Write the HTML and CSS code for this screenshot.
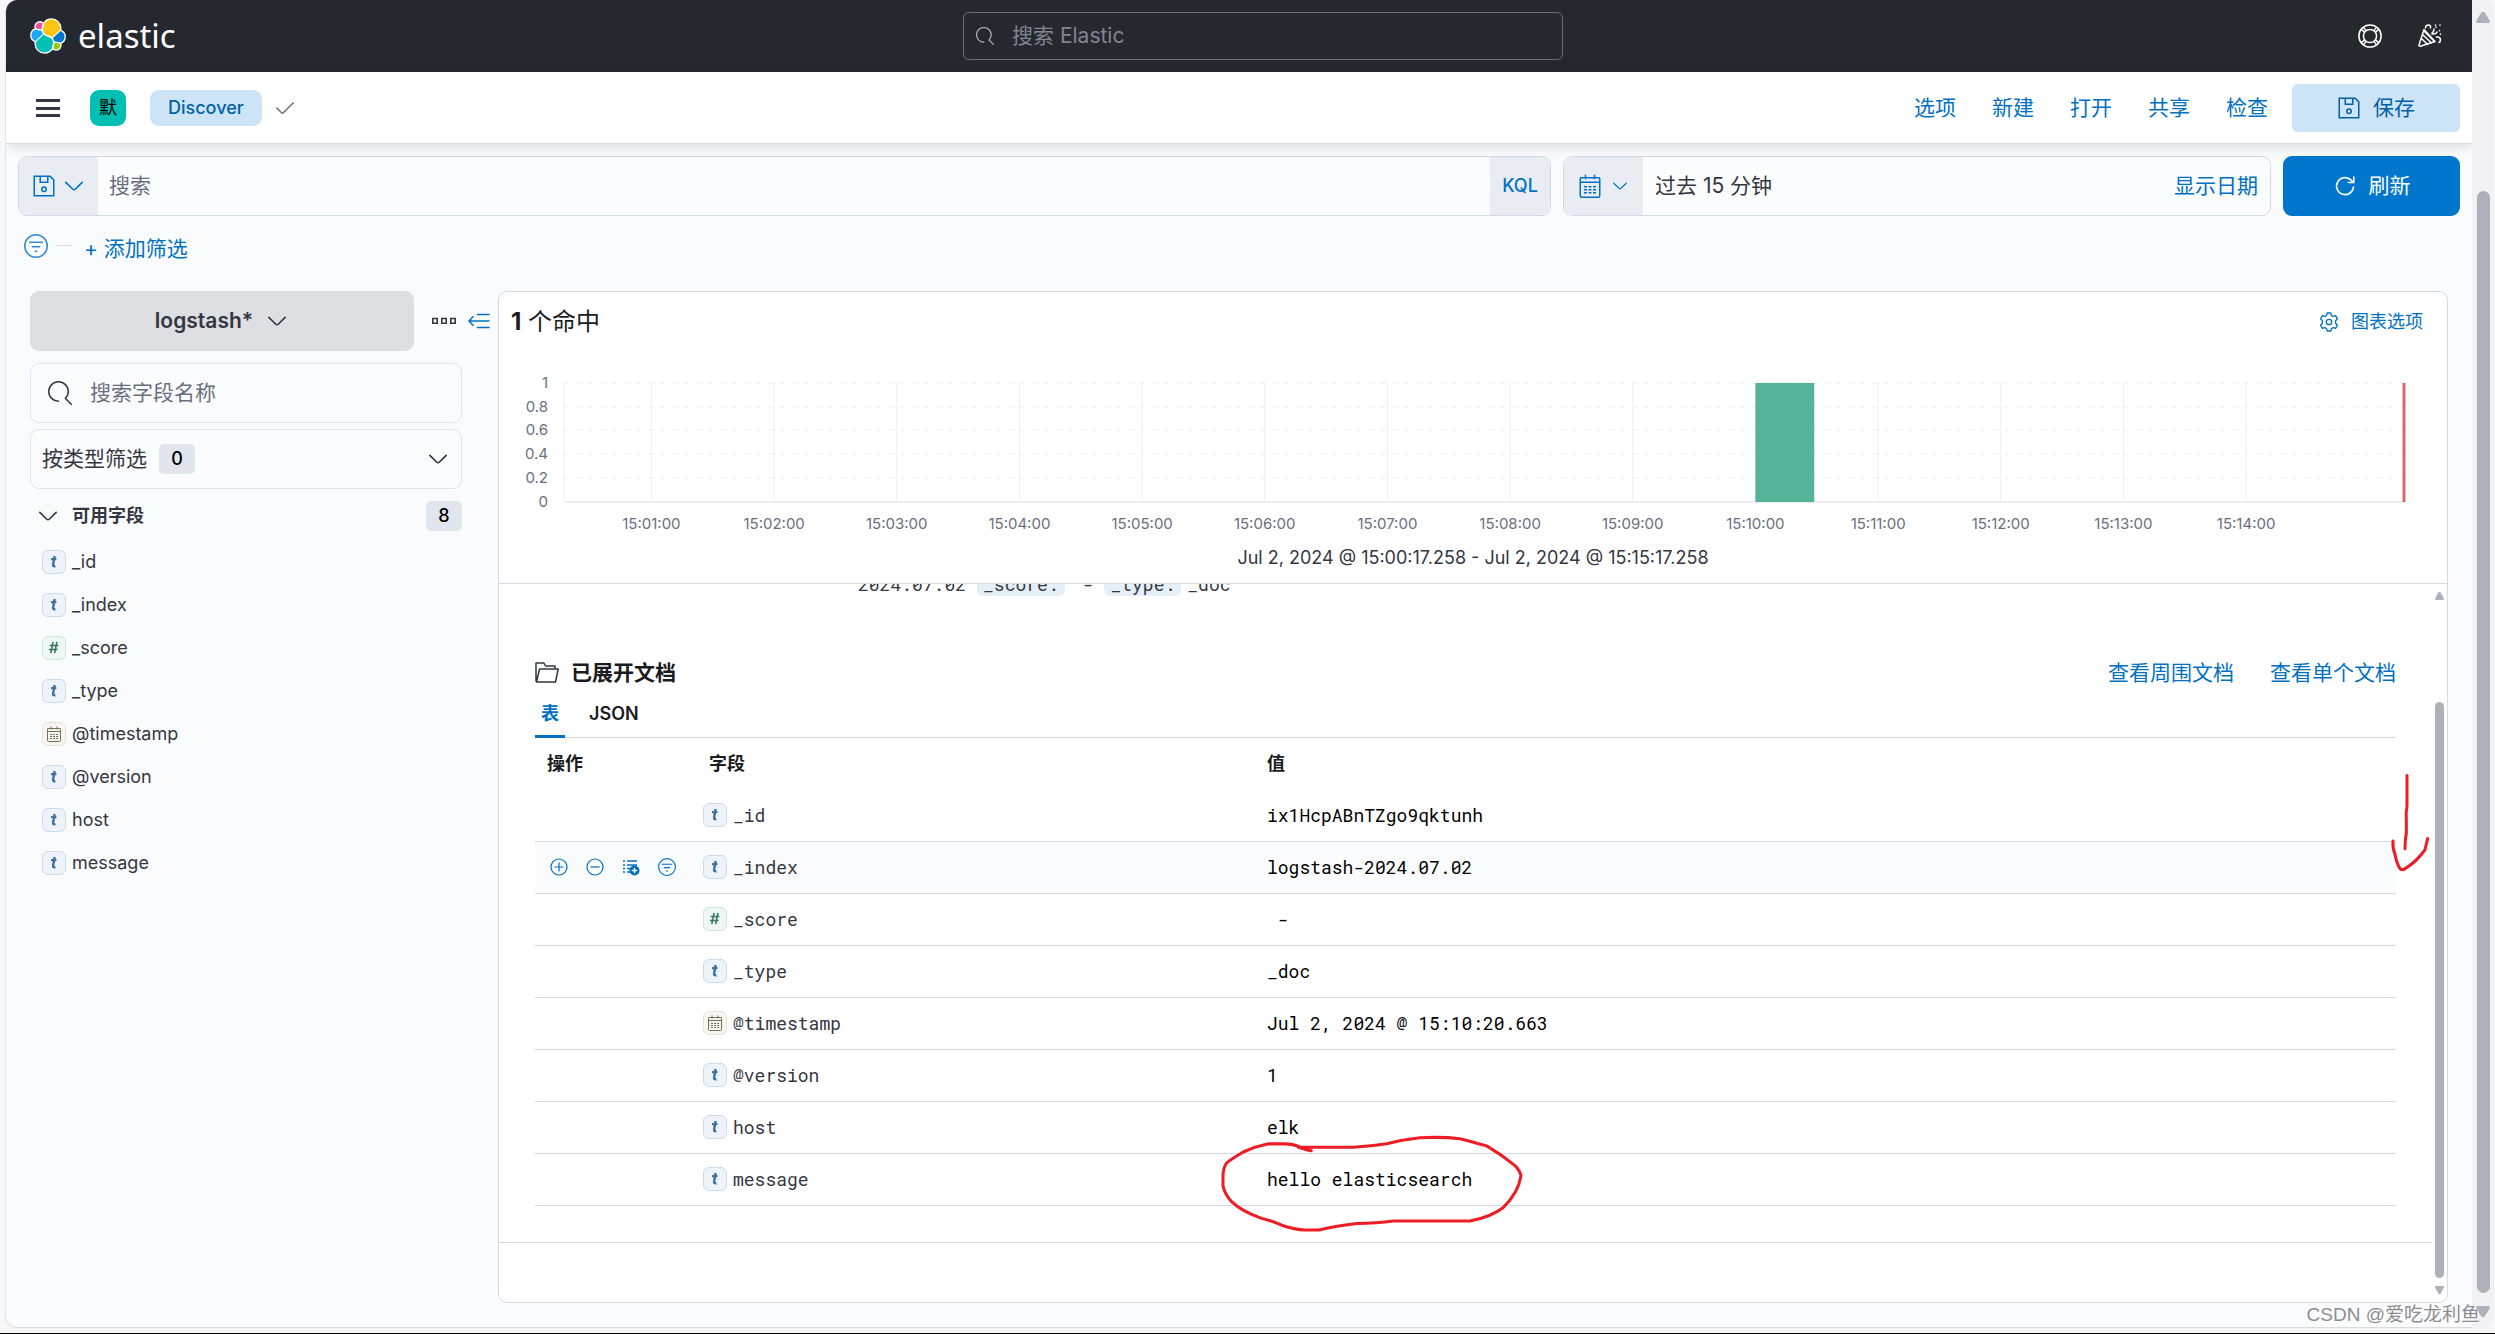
FILE: index.html
```html
<!DOCTYPE html>
<html lang="zh-CN">
<head>
<meta charset="utf-8">
<title>Discover - Elastic</title>
<link rel="stylesheet" href="styles.css">
</head>
<body>
<svg class="defs" aria-hidden="true">
  <symbol id="i-search" viewBox="0 0 16 16"><path fill="currentColor" d="M11.271 11.978l3.872 3.873a.502.502 0 00.708 0 .502.502 0 000-.708l-3.565-3.564c2.38-2.747 2.267-6.923-.342-9.532-2.73-2.73-7.17-2.73-9.898 0-2.728 2.729-2.728 7.17 0 9.9a6.955 6.955 0 004.949 2.05.5.5 0 000-1 5.96 5.96 0 01-4.242-1.757 6.01 6.01 0 010-8.486 6.004 6.004 0 018.484 0 6.01 6.01 0 010 8.486.5.5 0 00.034.738z"/></symbol>
  <symbol id="i-down" viewBox="0 0 16 16"><path fill="currentColor" d="M13.069 5.157L8.384 9.768a.546.546 0 01-.768 0L2.93 5.158a.552.552 0 00-.771 0 .53.53 0 000 .759l4.684 4.61c.641.631 1.672.63 2.312 0l4.684-4.61a.53.53 0 000-.76.552.552 0 00-.771 0z"/></symbol>
  <symbol id="i-save" viewBox="0 0 16 16"><path fill="none" stroke="currentColor" d="M1.5 1.5h10.6l2.4 2.4v10.6h-13zM5.5 1.5v4h5v-4"/><circle cx="8" cy="10.2" r="1.5" fill="none" stroke="currentColor"/></symbol>
  <symbol id="i-cal" viewBox="0 0 16 16"><path fill="none" stroke="currentColor" d="M2 2.5h12a.5.5 0 01.5.5v11.5a1 1 0 01-1 1h-11a1 1 0 01-1-1V3a.5.5 0 01.5-.5zM1.500 5.500h13M5 .5v3M11 .5v3"/><path fill="none" stroke="currentColor" stroke-dasharray="2 1" d="M4 8.500h8M4 10.500h8M4 12.500h8"/></symbol>
  <symbol id="i-filter" viewBox="0 0 16 16"><circle cx="8" cy="8" r="7.5" fill="none" stroke="currentColor"/><path fill="none" stroke="currentColor" stroke-linecap="round" d="M3.8 5.500h8.400M5.600 8.500h4.800M7.500 11.500h1"/></symbol>
  <symbol id="i-t" viewBox="0 0 24 24"><path fill="none" stroke="currentColor" stroke-width="2.600" d="M12.700 5.400l-1.700 9.600q-.2 2.200 2.500 1.500M8.800 8.900h5.800"/></symbol>
  <symbol id="i-num" viewBox="0 0 24 24"><path fill="none" stroke="currentColor" stroke-width="1.700" d="M11 5.300L8.500 17.500M15.200 5.300L12.700 17.500M7.300 9.300h9.400M6.500 13.600h9.400"/></symbol>
</svg>

<div class="app">
  <header class="topbar">
    <a class="brand" href="#" aria-label="Elastic">
      <svg width="36" height="36" viewBox="0 0 32 32">
        <g stroke="#fff" stroke-width="2.400" stroke-linejoin="round">
          <path fill="#fec514" d="M12.580 13.787l7.002 3.211 7.066-6.213a7.849 7.849 0 00.152-1.557c0-4.287-3.462-7.787-7.717-7.787a7.710 7.710 0 00-6.371 3.384l-1.176 6.123z"/>
          <path fill="#00bfb3" d="M5.320 21.228a7.900 7.900 0 00-.15 1.566c0 4.300 3.487 7.800 7.775 7.800a7.743 7.743 0 006.407-3.400l1.163-6.090-1.553-2.984-7.026-3.216z"/>
          <path fill="#f04e98" d="M5.288 9.061l4.800 1.137 1.050-5.483A3.800 3.800 0 008.830 3.930a3.830 3.830 0 00-3.820 3.840c0 .45.09.89.278 1.291z"/>
          <path fill="#1ba9f5" d="M4.870 10.208A5.430 5.430 0 001.297 15.338a5.440 5.440 0 003.490 5.083l6.736-6.113-1.237-2.654z"/>
          <path fill="#93c90e" d="M20.862 27.185a3.780 3.780 0 002.295.783 3.830 3.830 0 003.820-3.840c0-.469-.082-.9-.249-1.290l-4.800-1.131z"/>
          <path fill="#0077cc" d="M21.848 20.563l5.283 1.243a5.440 5.440 0 003.573-5.130 5.450 5.450 0 00-3.490-5.079l-6.910 6.078z"/>
        </g>
        <g>
          <path fill="#fec514" d="M12.580 13.787l7.002 3.211 7.066-6.213a7.849 7.849 0 00.152-1.557c0-4.287-3.462-7.787-7.717-7.787a7.710 7.710 0 00-6.371 3.384l-1.176 6.123z"/>
          <path fill="#00bfb3" d="M5.320 21.228a7.900 7.900 0 00-.15 1.566c0 4.300 3.487 7.800 7.775 7.800a7.743 7.743 0 006.407-3.400l1.163-6.090-1.553-2.984-7.026-3.216z"/>
          <path fill="#f04e98" d="M5.288 9.061l4.800 1.137 1.050-5.483A3.800 3.800 0 008.830 3.930a3.830 3.830 0 00-3.820 3.840c0 .45.09.89.278 1.291z"/>
          <path fill="#1ba9f5" d="M4.870 10.208A5.430 5.430 0 001.297 15.338a5.440 5.440 0 003.490 5.083l6.736-6.113-1.237-2.654z"/>
          <path fill="#93c90e" d="M20.862 27.185a3.780 3.780 0 002.295.783 3.830 3.830 0 003.820-3.840c0-.469-.082-.9-.249-1.290l-4.800-1.131z"/>
          <path fill="#0077cc" d="M21.848 20.563l5.283 1.243a5.440 5.440 0 003.573-5.130 5.450 5.450 0 00-3.490-5.079l-6.910 6.078z"/>
        </g>
      </svg>
      <span class="wordmark">elastic</span>
    </a>
    <label class="global-search">
      <svg width="18" height="18"><use href="#i-search"/></svg>
      <input type="search" placeholder="搜索 Elastic" aria-label="搜索 Elastic">
    </label>
    <div class="top-actions">
      <button class="bare" aria-label="帮助">
        <svg width="24" height="24" viewBox="0 0 16 16" fill="none" stroke="#fff"><circle cx="8" cy="8" r="7.400"/><circle cx="8" cy="8" r="4.400"/><path d="M2.400 3.800l2.200 1.800M3.800 2.400l1.800 2.200M13.600 3.800l-2.200 1.800M12.200 2.400l-1.800 2.200M2.400 12.200l2.200-1.800M3.800 13.600l1.800-2.200M13.600 12.200l-2.200-1.800M12.200 13.600l-1.800-2.200"/></svg>
      </button>
      <button class="bare" aria-label="新增功能">
        <svg width="24" height="24" viewBox="0 0 24 24" fill="none" stroke="#fff" stroke-width="1.500" stroke-linecap="round" stroke-linejoin="round"><path d="M6 5.500L1 21q-.2 1.500 1.300 1.300L17 17.500zM5 11l8.500 8M4 15l5.500 5.500M6.500 7.500l9 9M7.500 4q0-3 3-3 2.500 0 2 3M14 9q2-1 2-4M14 10q4 .5 5-2M18.500 13q3.500-.5 4 2.500.2 2-1.500 3M18 3v.2M22 1v.2M21.500 6.500v.2M22.500 10v.2M17.500 1v.2"/></svg>
      </button>
    </div>
  </header>

  <nav class="navbar">
    <button class="bare" aria-label="切换导航"><svg width="24" height="18" viewBox="0 0 24 18" fill="#343741"><path d="M0 0h24v3H0zM0 8h24v3H0zM0 15h24v3H0z"/></svg></button>
    <button class="space">默</button>
    <button class="crumb">Discover</button>
    <svg class="tick" width="18" height="12" viewBox="0 0 18 12" fill="none" stroke="#69707d" stroke-width="1.500" stroke-linecap="round"><path d="M.8 6l5 5q.6.500 1.200 0L17.300.800"/></svg>
    <div class="nav-links">
      <a href="#">选项</a><a href="#">新建</a><a href="#">打开</a><a href="#">共享</a><a href="#">检查</a>
      <button class="save"><svg width="24" height="24"><use href="#i-save"/></svg>保存</button>
    </div>
  </nav>

  <section class="query">
    <div class="field kql">
      <button class="seg saved" aria-label="已保存查询"><svg width="24" height="24"><use href="#i-save"/></svg><svg width="24" height="24"><use href="#i-down"/></svg></button>
      <input type="text" placeholder="搜索" aria-label="搜索">
      <button class="seg lang">KQL</button>
    </div>
    <div class="field date">
      <button class="seg quick" aria-label="快速选择"><svg width="24" height="24"><use href="#i-cal"/></svg><svg width="18" height="18"><use href="#i-down"/></svg></button>
      <button class="range">过去 15 分钟</button>
      <a href="#">显示日期</a>
    </div>
    <button class="refresh"><svg width="24" height="24" viewBox="0 0 24 24" fill="none" stroke="#fff" stroke-width="1.600" stroke-linecap="round"><path d="M20.500 13a8.500 8.500 0 11-3-7.400l2.700 2.400M20.800 3v5.500h-5.500"/></svg>刷新</button>
  </section>

  <div class="filters">
    <svg width="24" height="24"><use href="#i-filter"/></svg>
    <span class="dash"></span>
    <a href="#">+ 添加筛选</a>
  </div>

  <div class="content">
    <aside class="sidebar">
      <div class="pattern">
        <button class="index">logstash*<svg width="24" height="24"><use href="#i-down"/></svg></button>
        <button class="bare" aria-label="更多"><svg width="24" height="24" viewBox="0 0 24 24" fill="none" stroke="#343741" stroke-width="1.600"><path d="M.8 9.500h4.400v4.800H.8zM9.800 9.500h4.400v4.800H9.800zM18.800 9.500h4.400v4.800h-4.400z"/></svg></button>
        <button class="bare collapse" aria-label="收起侧边栏"><svg width="22" height="16" viewBox="0 0 22 16" fill="none" stroke="#0071c2" stroke-width="1.600" stroke-linecap="round"><path d="M1 8h20M5 3.800L1 8l4 4.200M9.500 1.500H21M9.500 14.500H21"/></svg></button>
      </div>
      <label class="field find"><svg width="24" height="24"><use href="#i-search"/></svg><input type="search" placeholder="搜索字段名称" aria-label="搜索字段名称"></label>
      <button class="field types">按类型筛选<span class="badge">0</span><svg width="24" height="24"><use href="#i-down"/></svg></button>
      <button class="group"><svg width="24" height="24"><use href="#i-down"/></svg>可用字段<span class="badge">8</span></button>
      <ul class="fields">
        <li><svg class="tok"><use href="#i-t"/></svg>_id</li>
        <li><svg class="tok"><use href="#i-t"/></svg>_index</li>
        <li><svg class="tok num"><use href="#i-num"/></svg>_score</li>
        <li><svg class="tok"><use href="#i-t"/></svg>_type</li>
        <li><svg class="tok day"><use href="#i-cal"/></svg>@timestamp</li>
        <li><svg class="tok"><use href="#i-t"/></svg>@version</li>
        <li><svg class="tok"><use href="#i-t"/></svg>host</li>
        <li><svg class="tok"><use href="#i-t"/></svg>message</li>
      </ul>
    </aside>

    <main class="panel">
      <section class="histogram">
        <div class="hits">
          <h1><b>1</b> 个命中</h1>
          <a href="#"><svg width="20" height="20" viewBox="0 0 20 20" fill="none" stroke="currentColor" stroke-width="1.300" stroke-linejoin="round"><circle cx="10" cy="10" r="2.700"/><path d="M8.200 1h3.600l.7 2.500 1.600.9 2.500-.7 1.800 3.100L16.600 8.700v2.600l1.800 1.900-1.800 3.100-2.500-.7-1.600.9-.7 2.500H8.200l-.7-2.500-1.600-.9-2.500.7-1.800-3.100 1.800-1.900V8.700L1.600 6.800l1.800-3.100 2.500.7 1.600-.9z"/></svg>图表选项</a>
        </div>
        <svg class="chart" height="150" role="img" aria-label="命中数随时间分布">
          <g class="rows"><path d="M0 1h1840"/><path d="M0 25h1840"/><path d="M0 48h1840"/><path d="M0 72h1840"/><path d="M0 96h1840"/></g>
          <line class="axis" x1="0" x2="100%" y1="120" y2="120"/>
          <g class="cols"><line x1="0" x2="0" y1="1" y2="120"/><line x1="4.75%" x2="4.75%" y1="1" y2="120"/><line x1="11.42%" x2="11.42%" y1="1" y2="120"/><line x1="18.08%" x2="18.08%" y1="1" y2="120"/><line x1="24.75%" x2="24.75%" y1="1" y2="120"/><line x1="31.42%" x2="31.42%" y1="1" y2="120"/><line x1="38.08%" x2="38.08%" y1="1" y2="120"/><line x1="44.75%" x2="44.75%" y1="1" y2="120"/><line x1="51.42%" x2="51.42%" y1="1" y2="120"/><line x1="58.08%" x2="58.08%" y1="1" y2="120"/><line x1="64.75%" x2="64.75%" y1="1" y2="120"/><line x1="71.42%" x2="71.42%" y1="1" y2="120"/><line x1="78.08%" x2="78.08%" y1="1" y2="120"/><line x1="84.75%" x2="84.75%" y1="1" y2="120"/><line x1="91.42%" x2="91.42%" y1="1" y2="120"/></g>
          <rect x="64.75%" y="1" width="3.2%" height="119" fill="#54b399"/>
          <line class="now" x1="100%" x2="100%" y1="1" y2="120"/>
          <g class="ylab"><text x="-16" y="6">1</text><text x="-16" y="30">0.8</text><text x="-16" y="53">0.6</text><text x="-16" y="77">0.4</text><text x="-16" y="101">0.2</text><text x="-16" y="125">0</text></g>
          <g class="xlab"><text x="4.75%" y="147">15:01:00</text><text x="11.42%" y="147">15:02:00</text><text x="18.08%" y="147">15:03:00</text><text x="24.75%" y="147">15:04:00</text><text x="31.42%" y="147">15:05:00</text><text x="38.08%" y="147">15:06:00</text><text x="44.75%" y="147">15:07:00</text><text x="51.42%" y="147">15:08:00</text><text x="58.08%" y="147">15:09:00</text><text x="64.75%" y="147">15:10:00</text><text x="71.42%" y="147">15:11:00</text><text x="78.08%" y="147">15:12:00</text><text x="84.75%" y="147">15:13:00</text><text x="91.42%" y="147">15:14:00</text></g>
        </svg>
        <p class="caption">Jul 2, 2024 @ 15:00:17.258 - Jul 2, 2024 @ 15:15:17.258</p>
      </section>

      <div class="results">
        <div class="docs">
          <div class="summary"><span>2024.07.02</span><mark>_score:</mark><span class="none">-</span><mark>_type:</mark><span class="last">_doc</span></div>
          <section class="expanded">
            <div class="doc-head">
              <svg width="24" height="21" viewBox="0 0 24 21" fill="none" stroke="#343741" stroke-width="1.500" stroke-linejoin="round"><path d="M1 19.500V1h8l1.500 3H20v3M1.500 20L4.500 7h18.700L20.500 20z"/></svg>
              <h2>已展开文档</h2>
              <a href="#">查看周围文档</a><a href="#">查看单个文档</a>
            </div>
            <div class="tabs"><button class="tab on">表</button><button class="tab">JSON</button></div>
            <table>
              <thead><tr><th class="c-act">操作</th><th class="c-name">字段</th><th>值</th></tr></thead>
              <tbody>
                <tr><td></td><td class="name"><div><svg class="tok"><use href="#i-t"/></svg>_id</div></td><td>ix1HcpABnTZgo9qktunh</td></tr>
                <tr class="hover"><td><div class="acts">
                  <button class="bare" aria-label="筛留"><svg width="18" height="18" viewBox="0 0 18 18" fill="none" stroke="currentColor" stroke-width="1.200"><circle cx="9" cy="9" r="8"/><path d="M4.500 9h9M9 4.500v9"/></svg></button>
                  <button class="bare" aria-label="筛除"><svg width="18" height="18" viewBox="0 0 18 18" fill="none" stroke="currentColor" stroke-width="1.200"><circle cx="9" cy="9" r="8"/><path d="M4.500 9h9"/></svg></button>
                  <button class="bare" aria-label="切换列"><svg width="18" height="18" viewBox="0 0 18 18" fill="none" stroke="currentColor" stroke-width="1.300"><path d="M1 3h2M5 3h10M1 7h2M5 7h10M1 10.500h2M5 10.500h4M1 14h2M5 14h3"/><circle cx="12.500" cy="12.500" r="5" fill="currentColor" stroke="none"/><path stroke="#fff" d="M9.800 12.500h5.400M12.500 9.800v5.400"/></svg></button>
                  <button class="bare" aria-label="筛选存在的字段"><svg width="18" height="18"><use href="#i-filter"/></svg></button>
                </div></td><td class="name"><div><svg class="tok"><use href="#i-t"/></svg>_index</div></td><td>logstash-2024.07.02</td></tr>
                <tr><td></td><td class="name"><div><svg class="tok num"><use href="#i-num"/></svg>_score</div></td><td>&nbsp;-</td></tr>
                <tr><td></td><td class="name"><div><svg class="tok"><use href="#i-t"/></svg>_type</div></td><td>_doc</td></tr>
                <tr><td></td><td class="name"><div><svg class="tok day"><use href="#i-cal"/></svg>@timestamp</div></td><td>Jul 2, 2024 @ 15:10:20.663</td></tr>
                <tr><td></td><td class="name"><div><svg class="tok"><use href="#i-t"/></svg>@version</div></td><td>1</td></tr>
                <tr><td></td><td class="name"><div><svg class="tok"><use href="#i-t"/></svg>host</div></td><td>elk</td></tr>
                <tr><td></td><td class="name"><div><svg class="tok"><use href="#i-t"/></svg>message</div></td><td class="marked">hello elasticsearch
                  <svg class="ring" viewBox="90 1170 918 288" preserveAspectRatio="none"><path d="M364 1216Q345 1215 325 1203Q305 1196 285 1196H235Q195 1204 160 1220Q125 1240 110 1252Q99 1268 99 1290V1320Q105 1345 125 1366Q155 1395 215 1415Q245 1422 275 1435Q315 1448 345 1449H387Q430 1438 500 1430Q560 1430 610 1423H840Q905 1410 940 1383Q985 1340 993 1290Q990 1275 975 1260Q935 1228 890 1202Q845 1190 810 1181Q760 1175 690 1178Q640 1183 590 1196Q540 1204 490 1206H325L362 1216"/></svg></td></tr>
              </tbody>
            </table>
          </section>
        </div>
        <div class="bar inner" aria-hidden="true"><i class="up"></i><i class="thumb"></i><i class="down"></i></div>
        <svg class="arrow" viewBox="1020 1210 126 282" preserveAspectRatio="none"><path d="M1071 1220V1305Q1067 1325 1069 1345V1380Q1065 1400 1065 1424M1029 1403Q1027 1420 1035 1440Q1040 1465 1050 1480Q1057 1485 1065 1480Q1100 1460 1125 1427Q1129 1410 1133 1396"/></svg>
      </div>
    </main>
  </div>
</div>
<div class="bar outer" aria-hidden="true"><i class="up"></i><i class="thumb"></i><i class="down"></i></div>
<div class="watermark">CSDN @爱吃龙利鱼</div>
</body>
</html>
```
FILE: styles.css
```css
* { box-sizing: border-box; }

body {
  margin: 0;
  min-height: 100vh;
  display: flex;
  padding: 0 1px 5px 5px;
  background: #f7f7f7;
  border-bottom: 1px solid #000;
  color: #343741;
  font: 21px/30px Inter, "Noto Sans CJK SC", sans-serif;
}

.defs { position: absolute; width: 0; height: 0; }

button, input {
  margin: 0;
  padding: 0;
  border: 0;
  background: none;
  color: inherit;
  font: inherit;
}

input { flex: 1; min-width: 0; outline: 0; }
input::placeholder { color: #69707d; opacity: 1; }
a { color: #0071c2; text-decoration: none; }
svg { flex: none; display: block; }
h1, h2, p, ul { margin: 0; padding: 0; }
.bare { display: flex; }

.app {
  flex: 1;
  min-width: 0;
  display: flex;
  flex-direction: column;
  background: #fafbfd;
  border-left: 1px solid #e3e4e8;
  border-bottom: 1px solid #dcdcdc;
  border-radius: 12px 0 0 12px;
  overflow: hidden;
}

/* Header */
.topbar {
  height: 72px;
  display: grid;
  grid-template-columns: 933fr 600px 879fr;
  align-items: center;
  padding: 0 30px 0 24px;
  background: #25282f;
}
.brand { display: flex; align-items: center; gap: 12px; }
.wordmark { color: #fff; font: 400 33px/36px "Noto Sans", sans-serif; }
.global-search {
  display: flex;
  align-items: center;
  gap: 18px;
  height: 48px;
  padding: 0 12px;
  border: 1px solid #6b6c70;
  border-radius: 6px;
  color: #b8babd;
}
.global-search input::placeholder { color: #81858f; }
.top-actions { display: flex; justify-content: flex-end; gap: 36px; }

.navbar {
  position: relative;
  height: 72px;
  display: flex;
  align-items: center;
  padding: 0 12px 0 30px;
  background: #fff;
  border-bottom: 1px solid #d3dae6;
  box-shadow: 0 2px 12px rgba(0, 0, 0, .14);
}
.space {
  width: 36px;
  height: 36px;
  margin: 0 24px 0 30px;
  border-radius: 9px;
  background: #00bfb3;
  color: #000;
  font-size: 18px;
}
.crumb {
  height: 36px;
  padding: 0 18px;
  border-radius: 9px;
  background: #cce4f5;
  color: #0061a6;
  font-size: 18px;
  font-weight: 500;
}
.tick { margin-left: 14px; }
.nav-links { display: flex; align-items: center; gap: 36px; margin-left: auto; }
.save {
  display: flex;
  align-items: center;
  justify-content: center;
  gap: 12px;
  width: 168px;
  height: 48px;
  margin-left: -12px;
  border-radius: 6px;
  background: #cce4f5;
  color: #0061a6;
}

/* Query row */
.query {
  display: grid;
  grid-template-columns: 1533fr 708fr 177px;
  gap: 12px;
  padding: 12px 12px 0;
}
.field {
  display: flex;
  align-items: center;
  height: 60px;
  border: 1px solid #d3dae6;
  border-radius: 9px;
  background: #fbfcfd;
  overflow: hidden;
}
.seg {
  display: flex;
  align-items: center;
  justify-content: center;
  align-self: stretch;
  background: #e9edf3;
  color: #0071c2;
}
.kql input { padding: 0 11px; }
.saved { width: 79px; gap: 6px; }
.lang { width: 60px; font-size: 18px; font-weight: 500; }
.date { padding-right: 12px; }
.quick { width: 79px; gap: 9px; }
.range { flex: 1; padding-left: 12px; text-align: left; }
.refresh {
  display: flex;
  align-items: center;
  justify-content: center;
  gap: 12px;
  border-radius: 9px;
  background: #0077cc;
  color: #fff;
}

.filters {
  display: flex;
  align-items: flex-start;
  height: 30px;
  margin-top: 18px;
  padding-left: 18px;
  color: #2f8bd0;
}
.dash { width: 15px; height: 1px; margin: 11px 12px 0 9px; background: #d3dae6; }

/* Body */
.content { flex: 1; display: flex; padding: 27px 24px 24px; }
.sidebar { width: 468px; }
.pattern { display: flex; align-items: center; margin-bottom: 12px; }
.index {
  display: flex;
  align-items: center;
  justify-content: center;
  gap: 12px;
  width: 384px;
  height: 60px;
  margin-right: 18px;
  border-radius: 9px;
  background: #dddfe3;
  font-weight: 600;
}
.collapse { margin-left: 12px; }
.find, .types { width: 432px; border-color: #e2e5ef; }
.find { gap: 18px; padding: 0 17px; margin-bottom: 6px; }
.types { gap: 12px; padding: 0 11px; }
.types svg { margin-left: auto; }
.badge {
  width: 36px;
  border-radius: 5px;
  background: #e0e5ee;
  color: #000;
  font: 500 18px/30px Inter, sans-serif;
  text-align: center;
}
.group {
  display: flex;
  align-items: center;
  gap: 12px;
  width: 432px;
  height: 48px;
  margin-top: 3px;
  padding-left: 6px;
  font-size: 18px;
  font-weight: 700;
}
.group .badge { margin-left: auto; }
.fields { list-style: none; padding: 0 12px; }
.fields li { display: flex; align-items: center; gap: 6px; height: 43px; font-size: 18px; }
.tok {
  width: 24px;
  height: 24px;
  border: 1px solid #cadcec;
  border-radius: 6px;
  background: #edf3f9;
  color: #40709c;
}
.num { background: #eef7f4; border-color: #cce8df; color: #387765; }
.day { padding: 3px; background: #f8f6f2; border-color: #e9e2d4; color: #7b6f55; }

.panel {
  flex: 1;
  min-width: 0;
  display: flex;
  flex-direction: column;
  border: 1px solid #d3dae6;
  border-radius: 9px;
  background: #fff;
}
.histogram { padding: 12px 0 10px; border-bottom: 1px solid #d3dae6; }
.hits { display: flex; align-items: center; justify-content: space-between; height: 36px; padding: 0 24px 0 12px; }
.hits h1 { font-size: 24px; font-weight: 400; color: #1a1c21; }
.hits b { font-weight: 700; }
.hits a { display: flex; align-items: center; gap: 12px; font-size: 18px; }
.chart { width: calc(100% - 108px); margin: 42px 0 0 65px; overflow: visible; }
.rows path { stroke: #eceef2; stroke-width: 1; stroke-dasharray: 6 6; fill: none; }
.axis { stroke: #eceef2; stroke-width: 2; }
.cols line { stroke: #eceff3; stroke-width: 1; }
.now { stroke: #d36b66; stroke-width: 3; }
.xlab, .ylab { fill: #69707d; font-size: 15px; }
.xlab { text-anchor: middle; }
.ylab { text-anchor: end; }
.caption { margin-top: 11px; font-size: 18px; line-height: 30px; text-align: center; }

.results { position: relative; flex: 1; display: flex; }
.docs { flex: 1; min-width: 0; }
.summary {
  display: flex;
  align-items: flex-end;
  height: 12px;
  padding-left: 359px;
  overflow: hidden;
  font: 18px/24px "Roboto Mono", "Liberation Mono", monospace;
}
.summary mark { margin: 0 0 0 11px; padding: 0 6px; border-radius: 6px; background: #e5eff7; color: inherit; }
.summary .none { margin-left: 18px; }
.summary .last { margin-left: 6px; }
.expanded { padding: 59px 36px 36px; border-bottom: 1px solid #d3dae6; }
.doc-head { display: flex; align-items: center; height: 35px; }
.doc-head h2 { flex: 1; margin-left: 12px; font-size: 21px; color: #1a1c21; }
.doc-head a { margin-left: 36px; }
.tabs { display: flex; gap: 18px; height: 48px; border-bottom: 1px solid #d3dae6; }
.tab { height: 48px; padding: 0 6px; font-size: 18px; font-weight: 600; color: #1a1c21; }
.on { border-bottom: 3px solid #0071c2; padding-top: 3px; color: #0071c2; }

table { width: 100%; border-collapse: collapse; table-layout: fixed; }
th { height: 51px; padding: 0 12px; text-align: left; font-size: 18px; font-weight: 700; color: #1a1c21; }
.c-act { width: 162px; }
.c-name { width: 558px; }
td {
  height: 52px;
  padding: 0 12px;
  border-bottom: 1px solid #d3dae6;
  color: #000;
  font: 18px/24px "Roboto Mono", "Liberation Mono", monospace;
}
.name { padding: 0 6px; color: #343741; }
.name div { display: flex; align-items: center; gap: 6px; }
.hover { background: #fafbfd; }
.acts { display: flex; gap: 18px; padding-left: 3px; color: #0071c2; }

/* Hand-drawn marks */
.marked { position: relative; }
.ring, .arrow { position: absolute; fill: none; stroke: #ee1c25; stroke-width: 9; stroke-linecap: round; stroke-linejoin: round; }
.ring { left: -35px; top: -19px; width: 306px; height: 98px; }
.arrow { right: 15px; top: 188px; width: 42px; height: 101px; }

/* Scroll bars */
.bar { display: flex; flex-direction: column; align-items: center; }
.thumb { flex: 1; width: 100%; border-radius: 7px; background: #adb1b9; }
.up, .down { width: 100%; background: #adb1b9; }
.up { clip-path: polygon(40% 0, 60% 0, 100% 85%, 95% 100%, 5% 100%, 0 85%); }
.down { clip-path: polygon(5% 0, 95% 0, 100% 15%, 60% 100%, 40% 100%, 0 15%); }
.inner { width: 15px; padding: 8px 3px 8px; }
.inner .up, .inner .down { height: 8px; }
.inner .up { margin-bottom: 102px; }
.inner .down { margin-top: 8px; }
.outer { width: 22px; padding: 12px 4px 11px; background: #f2f2f4; border-radius: 0 12px 12px 0; }
.outer .up, .outer .down { height: 11px; }
.outer .up { margin-bottom: 168px; }
.outer .thumb { width: 13px; }
.outer .down { margin-top: 13px; }

.watermark {
  position: absolute;
  right: 15px;
  bottom: 5px;
  color: #8b8d91;
  font: 19px/28px "Liberation Sans", "Noto Sans CJK SC", sans-serif;
  text-shadow: 1px 1px 0 #fff;
}
```
